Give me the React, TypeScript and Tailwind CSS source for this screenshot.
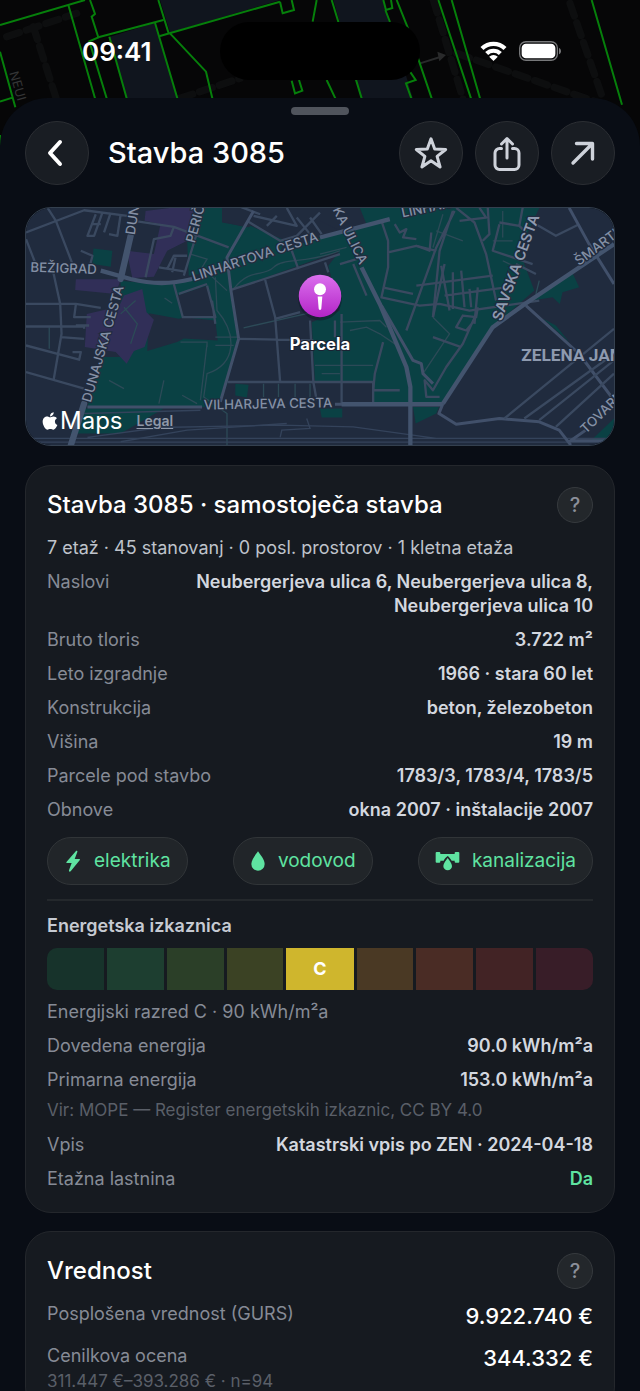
import type { ReactNode } from "react";
import { FaApple } from "react-icons/fa";

interface Fact {
  label: string;
  value: string;
  accent?: boolean;
}

const buildingFacts: Fact[] = [
  { label: "Naslovi", value: "Neubergerjeva ulica 6, Neubergerjeva ulica 8, Neubergerjeva ulica 10" },
  { label: "Bruto tloris", value: "3.722 m²" },
  { label: "Leto izgradnje", value: "1966 · stara 60 let" },
  { label: "Konstrukcija", value: "beton, železobeton" },
  { label: "Višina", value: "19 m" },
  { label: "Parcele pod stavbo", value: "1783/3, 1783/4, 1783/5" },
  { label: "Obnove", value: "okna 2007 · inštalacije 2007" },
];

const energyFacts: Fact[] = [
  { label: "Dovedena energija", value: "90.0 kWh/m²a" },
  { label: "Primarna energija", value: "153.0 kWh/m²a" },
];

const registryFacts: Fact[] = [
  { label: "Vpis", value: "Katastrski vpis po ZEN · 2024-04-18" },
  { label: "Etažna lastnina", value: "Da", accent: true },
];

const energyScale = [
  { id: "A2", color: "bg-[#17332b]" },
  { id: "A1", color: "bg-[#1d3e30]" },
  { id: "B2", color: "bg-[#2b3f28]" },
  { id: "B1", color: "bg-[#3b4224]" },
  { id: "C", color: "bg-[#cfb62d]", active: true },
  { id: "D", color: "bg-[#4a3924]" },
  { id: "E", color: "bg-[#4a2c25]" },
  { id: "F", color: "bg-[#422325]" },
  { id: "G", color: "bg-[#381d28]" },
];

function ParcelMap() {
  return (
    <svg
      viewBox="0 0 1920 450"
      preserveAspectRatio="xMidYMin slice"
      className="absolute inset-x-0 top-0 h-[150px] w-full"
      aria-hidden="true"
    >
      <rect width="1920" height="450" fill="#060607" />
      <g fill="#10151e">
        <path d="M480 0H840L510 98Z" />
        <path d="M330 110 465 68 532 295H380Z" />
        <path d="M1000 0H1150L1240 300H1085Z" />
      </g>
      <g fill="none" stroke="#0d0e0f" strokeWidth="22" strokeDasharray="40 22" strokeLinecap="round">
        <path d="M20 110 230 40M100 80 170 300M540 295 720 235" />
        <path d="M1300 0 1390 300M1370 160 1800 310M1710 10 1810 300" />
      </g>
      <path d="M1260 190 1330 168" fill="none" stroke="#292a2b" strokeWidth="6" />
      <path d="M1312 155 1338 165 1318 184Z" fill="#292a2b" />
      <g fill="none" stroke="#067f0b" strokeWidth="6">
        <path d="M0 75 255 0M205 15 285 295M270 0 285 42 275 50 295 112 268 124 320 295" />
        <path d="M295 112 490 60M328 110 380 295M465 68 532 295M475 0 506 100M480 108 840 5" />
        <path d="M510 100 618 215 637 295M0 155 46 322M0 305 40 292M0 405v35" />
        <path d="M840 5 848 40 882 30 875 0M950 0 938 65M875 242 885 280 907 272 897 240" />
        <path d="M995 0 1085 295M980 240 1006 295M1150 0l8 30 19-6-4-24M1156 30l14 36" />
        <path d="M1190 0 1222 80 1295 295M1230 215 1247 240 1218 250 1234 295" />
        <path d="M1315 0 1413 295M1355 0 1440 295M1775 0 1866 314" />
      </g>
      <text transform="translate(28 218) rotate(74)" fill="#343536" className="text-[38px]">
        NEUI
      </text>
    </svg>
  );
}

function LocationMap() {
  return (
    <svg
      viewBox="15 21 1770 714"
      preserveAspectRatio="xMidYMid slice"
      className="block h-[237px] w-full"
      role="img"
      aria-label="Parcela"
    >
      <defs>
        <linearGradient id="pin" x1="0" y1="0" x2="0" y2="1">
          <stop offset="0" stopColor="#db70ee" />
          <stop offset="1" stopColor="#b324c6" />
        </linearGradient>
      </defs>
      <rect x="0" y="0" width="1800" height="750" fill="#202b3e" />

      {/* Parks */}
      <g fill="#0a4144">
        <path d="M300 240 400 250 515 235 900 110 960 95 1020 60V21H1560L1500 150 1545 270 1420 380 1270 610H1062V545H885L875 365 960 330 925 195 960 150 632 268 655 420 622 545 600 620H200L240 470 330 470 300 340Z" />
        <path d="M500 120 545 21H605V65L690 80 790 125 780 155 600 210 505 225Z" />
        <path d="M690 75 810 125 630 160Z" />
        <path d="M218 143 275 150 270 198 215 190Z" />
        <path d="M188 625H430L300 700H150Z" />
        <path d="M645 550 685 553 680 592 645 586Z" />
        <path d="M1540 300 1657 210 1680 260 1630 275 1622 310 1600 290Z" />
        <path d="M1572 355 1610 375 1650 425Z" />
        <path d="M1180 620H1258L1250 640 1188 670Z" />
        <path d="M1715 722 1785 655V722Z" />
        <path d="M900 625H967V652H905Z" />
      </g>
      <g fill="#202b3e">
        <path d="M470 285 560 255 585 350H487Z" />
        <path d="M385 338 475 355 490 350 585 360 592 420 490 414 470 425 380 452Z" />
        <path d="M1020 21 1040 70 960 90 900 60 900 21Z" />
        <path d="M605 21H690L680 80 605 62Z" />
        <path d="M590 620 625 545 645 550 620 640Z" />
      </g>

      {/* Commercial blocks */}
      <g fill="#312f58">
        <path d="M372 60 375 30 450 21H522L500 120 440 150 400 228 335 232 318 150 400 160 420 70Z" />
        <path d="M165 236 300 236 285 280 163 268Z" />
        <path d="M310 285 365 265 378 335 400 358 372 440 340 452 318 490 285 455 192 440 198 340 295 318Z" />
      </g>

      {/* Footpaths */}
      <g fill="none" stroke="#2c4a57" strokeWidth="4">
        <path d="M510 160 560 175 545 200 620 270M585 230 590 330C650 400 650 490 560 520L550 590 620 640V735M640 265C690 200 730 230 760 200S860 190 960 150" />
        <path d="M560 430 540 600M480 425H560V440M430 540 415 610M265 540 310 565M485 585 530 610M432 292 455 308M585 410H655M585 435H640M670 382 880 335" />
        <path d="M310 320 350 370 330 430M345 300 300 340M85 380V445M730 550V590M775 550V590M825 550V590M870 550V590M885 495H1060M905 520H960" />
        <path d="M990 390 1040 380 1080 400 1140 440M900 160 980 140M1100 380 1080 360 960 365M1240 350 1290 400 1210 520" />
        <path d="M1250 90 1330 120M1270 40 1240 140M1450 30V110M1420 120 1480 120M1450 180 1490 200M1560 240 1550 280" />
      </g>

      {/* Railway */}
      <g fill="none" stroke="#34435b" strokeWidth="4">
        <path d="M15 715H1785M15 726H1785M200 712 420 682 780 675 1000 680 1250 715" />
        <path d="M300 725 500 690 800 670M780 712 785 690 870 685 860 655M190 640 540 630" />
      </g>

      {/* Side streets */}
      <g fill="none" stroke="#3a4960" strokeWidth="7" strokeLinejoin="round">
        <path d="M15 95 190 28 320 45M15 115 50 205M80 21 105 60 155 190M225 40 200 105H220L245 35M270 35 250 95M300 40 290 105 265 100M215 70H240M180 150 215 165 205 205" />
        <path d="M95 205 118 310 122 400 98 540M15 310H165L240 322M165 312 160 350 210 350M165 375H205M15 378H190V385M120 410 190 415M15 435 175 478 180 455 155 455M15 515 190 565" />
        <path d="M340 60 460 78 625 140M530 95 490 225M500 165H460L440 205M465 170 455 215M415 200 490 212M375 230 400 115 450 105 460 78" />
        <path d="M460 250 487 350H585L560 255M475 280 560 250M585 370 575 300" />
        <path d="M680 60 780 120 830 105 900 35M700 45 830 75 800 21M740 75 770 45M830 50 870 100M870 50 905 100M640 10 720 40" />
        <path d="M632 268 960 160M735 238 765 350 780 545M765 355 840 335M655 415 880 420M870 360 880 545 890 600M815 150 835 205M915 185 925 215" />
        <path d="M622 545H1060V610M965 340V610M960 190 1010 175M945 360V410" />
        <path d="M1085 60 1105 120 1105 200 1085 290 1200 315 1260 310 1350 330 1560 300M1105 155 1190 135 1250 150M1095 262 1180 280M1190 255 1420 225" />
        <path d="M1305 30 1250 140 1160 390M1300 30 1260 150 1240 350M1310 21 1365 65 1400 160 1430 300M1405 21 1410 100 1390 120M1320 60 1400 50 1380 21" />
        <path d="M1125 70 1140 95 1160 85 1150 110 1190 115M1235 95 1230 150 1190 135M1275 190 1240 350M1275 285 1460 260M1300 215 1300 325M1325 210 1335 320M1350 265 1355 320M1375 260 1365 370" />
        <path d="M1375 320 1370 350 1330 345 1310 380 1340 390 1365 360M1370 340 1330 430 1280 500 1240 570 1215 540 1220 590H1260M1240 410 1325 440M1265 195 1290 330" />
        <path d="M1440 65 1500 75 1520 95M1440 70 1420 150 1540 190M1510 21 1500 75M1490 190 1550 220M1550 70 1610 105 1680 70" />
        <path d="M1090 425 1065 520 1060 570H1140M1000 190 1040 285" />
      </g>

      {/* Main streets */}
      <g fill="none" stroke="#41506a" strokeWidth="9" strokeLinejoin="round">
        <path d="M1650 21 1710 130 1785 250M1520 315 1680 460 1785 600" />
        <path d="M1270 610 1258 640 1310 672 1440 655 1560 665 1620 690 1655 735M1650 725 1700 690M1655 722H1785" />
        <path d="M200 620H545M655 415 632 270 620 170 700 30M655 415 600 605M945 612H970" />
        <path d="M1085 315 1180 480 1205 490 1210 520 1240 550" />
      </g>
      <g fill="none" stroke="#3a4960" strokeWidth="7">
        <path d="M1455 655 1785 385M1515 655 1785 460M1560 660 1785 480M1610 680 1785 520" />
      </g>
      <g fill="none" stroke="#43546e" strokeWidth="13" strokeLinejoin="round">
        <path d="M1025 200 1080 310 1160 500 1172 560V735M965 612H1270" />
        <path d="M240 210 330 235C400 252 450 250 515 235M900 110 1110 55" />
        <path d="M1270 610 1420 380 1520 308 1785 130" />
      </g>
      <path d="M330 105 300 235M190 610 150 735" fill="none" stroke="#43546e" strokeWidth="19" strokeLinecap="round" />

      {/* Street names */}
      <g className="text-[40px] font-medium" fill="#8490a5" stroke="#202b3e" strokeWidth="7" paintOrder="stroke">
        <text transform="translate(28 213) rotate(2)">BEŽIGRAD</text>
        <text transform="translate(342 103) rotate(-81)">DUNAJSKA</text>
        <text transform="translate(210 608) rotate(-74)">DUNAJSKA CESTA</text>
        <text transform="translate(523 128) rotate(-75)">PERIČEVA</text>
        <text transform="translate(520 242) rotate(-18)">LINHARTOVA CESTA</text>
        <text transform="translate(1148 50) rotate(-12)">LINHARTOVA</text>
        <text transform="translate(550 628) rotate(-1)">VILHARJEVA CESTA</text>
        <text transform="translate(938 26) rotate(64)">KA ULICA</text>
        <text transform="translate(1680 196) rotate(-37)">ŠMARTINSKA</text>
        <text transform="translate(1700 702) rotate(-44)">TOVARNIŠKA</text>
      </g>
      <g fill="#8e9aaf" stroke="#202b3e" strokeWidth="7" paintOrder="stroke">
        <text transform="translate(1446 364) rotate(-70)" className="text-[44px] font-semibold">
          SAVSKA CESTA
        </text>
        <text x="1506" y="481" className="font-['Liberation_Sans_Narrow','Roboto',sans-serif] text-[52px] font-bold">
          ZELENA JAMA
        </text>
      </g>

      {/* Pin */}
      <circle cx="900" cy="294" r="66" fill="#10182a" opacity="0.5" />
      <circle cx="900" cy="286" r="64" fill="url(#pin)" />
      <circle cx="900" cy="266" r="18" fill="#fff" />
      <path d="M893 288h14l-3 36a4 4 0 0 1-8 0Z" fill="#fff" />
      <text
        x="900"
        y="449"
        textAnchor="middle"
        fill="#fff"
        stroke="#1a2333"
        strokeWidth="6"
        paintOrder="stroke"
        className="text-[50px] font-bold"
      >
        Parcela
      </text>
    </svg>
  );
}

function StatusBar() {
  return (
    <div className="relative flex h-[98px] shrink-0 items-start px-[82px] pt-[22px]">
      <span className="flex h-[58px] flex-1 items-center text-[26px] font-semibold text-white">09:41</span>
      <div className="h-[58px] w-[200px] rounded-full bg-black" />
      <div className="flex h-[58px] flex-1 items-center justify-end gap-3">
        <svg viewBox="0 0 80 60" className="h-5 w-[27px]" fill="#fff" aria-label="Wi-Fi">
          <path d="M40 60 27 47a19 19 0 0 1 26 0Z" />
          <path d="M15 33a36 36 0 0 1 50 0l-9 9a23 23 0 0 0-32 0Z" />
          <path d="M1 18a56 56 0 0 1 78 0l-9 9a43 43 0 0 0-60 0Z" />
        </svg>
        <svg viewBox="0 0 130 60" className="-mr-1 h-5 w-[43px]" aria-label="Baterija">
          <rect x="2" y="2" width="114" height="56" rx="19" fill="none" stroke="#77787a" strokeWidth="4" />
          <rect x="8" y="8" width="102" height="44" rx="13" fill="#fff" />
          <path d="M121 21c8 3 8 16 0 19Z" fill="#77787a" />
        </svg>
      </div>
    </div>
  );
}

function RoundButton({ label, children }: { label: string; children: ReactNode }) {
  return (
    <button
      type="button"
      aria-label={label}
      className="flex size-16 shrink-0 items-center justify-center rounded-full border border-[#2c2f34] bg-[#191d23] text-[#ced2da]"
    >
      <svg viewBox="0 0 36 36" className="size-9" fill="none" stroke="currentColor" strokeLinecap="round" strokeLinejoin="round">
        {children}
      </svg>
    </button>
  );
}

function Card({ title, children }: { title: string; children: ReactNode }) {
  return (
    <section className="rounded-[26px] border border-[#24272c] bg-[#161a20] p-[21px]">
      <div className="flex items-center justify-between">
        <h2 className="text-2xl font-medium text-white">{title}</h2>
        <button
          type="button"
          aria-label="Pomoč"
          className="size-9 rounded-full border border-[#363a3e] bg-[#23272b] text-xl leading-none font-medium text-[#8b909a]"
        >
          ?
        </button>
      </div>
      {children}
    </section>
  );
}

function FactList({ facts }: { facts: Fact[] }) {
  return (
    <dl className="flex flex-col gap-2.5">
      {facts.map((fact) => (
        <div key={fact.label} className="flex justify-between gap-6">
          <dt className="shrink-0 text-[#868b96]">{fact.label}</dt>
          <dd
            className={
              fact.accent
                ? "text-right font-semibold text-[#5fe3a1]"
                : "max-w-[420px] text-right font-semibold text-[#d3d7df]"
            }
          >
            {fact.value}
          </dd>
        </div>
      ))}
    </dl>
  );
}

function Chip({ label, children }: { label: string; children: ReactNode }) {
  return (
    <li className="flex h-12 items-center gap-3 rounded-full border border-[#313538] bg-[#212529] px-4 text-[19px] text-[#5fe3a1]">
      {children}
      <span>{label}</span>
    </li>
  );
}

export default function App() {
  return (
    <div className="relative flex h-screen flex-col overflow-hidden bg-[#060607] font-[Inter,'Liberation_Sans',sans-serif]">
      <ParcelMap />
      <StatusBar />

      <main className="relative flex-1 overflow-hidden rounded-t-[48px] bg-[#090d15] px-[25px] pt-[9px] text-lg leading-6">
        <div className="mx-auto h-2 w-[58px] rounded-full bg-[#50545c]" />

        <header className="mt-1.5 flex items-center gap-3">
          <RoundButton label="Nazaj">
            <path d="M21 7 11 18l10 11" stroke="#fff" strokeWidth="4" />
          </RoundButton>
          <h1 className="ml-[7px] flex-1 text-[29px] font-medium text-white">Stavba 3085</h1>
          <RoundButton label="Priljubljeno">
            <path d="m18 3.800 3.700 10.300 11 .400-8.600 6.900 3 10.600-9.100-6.200-9.100 6.200 3-10.600-8.600-6.900 11-.400Z" strokeWidth="3" />
          </RoundButton>
          <RoundButton label="Deli">
            <path d="M18 23V4M12.500 9 18 3.500 23.500 9" strokeWidth="3" />
            <path d="M12.500 13.500H10.500a4.500 4.500 0 0 0-4.500 4.500v12a4.500 4.500 0 0 0 4.500 4.500h15a4.500 4.500 0 0 0 4.500-4.500V18a4.500 4.500 0 0 0-4.500-4.500H23.500" strokeWidth="3" />
          </RoundButton>
          <RoundButton label="Odpri">
            <path d="M8 28 27 9M11.500 8.500H27.500V24" strokeWidth="3.400" />
          </RoundButton>
        </header>

        <div className="relative mt-[22px] overflow-hidden rounded-[26px] border border-[#34404f]">
          <LocationMap />
          <div className="absolute bottom-3 left-3.5 flex items-center text-white">
            <FaApple className="size-5" />
            <span className="text-2xl leading-6">Maps</span>
            <a href="#" className="ml-3.5 text-sm font-semibold text-[#8f99a9] underline underline-offset-2">
              Legal
            </a>
          </div>
        </div>

        <div className="mt-[19px] flex flex-col gap-[18px]">
          <Card title="Stavba 3085 · samostoječa stavba">
            <p className="mt-[13px] mb-2.5 text-[#bfc3cb]">7 etaž · 45 stanovanj · 0 posl. prostorov · 1 kletna etaža</p>
            <FactList facts={buildingFacts} />

            <ul className="mt-[15px] flex justify-between">
              <Chip label="elektrika">
                <svg viewBox="0 0 54 66" className="h-[22px] w-[18px]" fill="currentColor" aria-hidden="true">
                  <path d="M36 3 8 35c-2 2-1 4 2 4h13l-8 22c-1 4 2 5 5 3l27-33c2-2 1-4-2-4H32l8-21c1-3-2-5-4-3Z" />
                </svg>
              </Chip>
              <Chip label="vodovod">
                <svg viewBox="0 0 48 60" className="h-5 w-4" fill="currentColor" aria-hidden="true">
                  <path d="M24 1C18 10 4 26 4 39a20 20 0 0 0 40 0C44 26 30 10 24 1Z" />
                </svg>
              </Chip>
              <Chip label="kanalizacija">
                <svg viewBox="0 0 75 60" className="h-5 w-[25px]" fill="currentColor" aria-hidden="true">
                  <path d="M5 3h8q3 0 3 3v3h43V6q0-3 3-3h8q3 0 3 3v26q0 3-3 3h-8q-3 0-3-3v-3H50C46 23 42 18 38 15 33 19 29 23 26 29H16v3q0 3-3 3H5q-3 0-3-3V6q0-3 3-3Z" />
                  <path d="M38 21c-4 7-13 16-13 24a13 13 0 0 0 26 0c0-8-9-17-13-24Z" />
                </svg>
              </Chip>
            </ul>

            <hr className="mt-3.5 mb-[13px] border-t-2 border-[#24282c]" />

            <h3 className="font-semibold text-[#c6cad2]">Energetska izkaznica</h3>
            <div className="my-2.5 flex h-[42px] gap-[3px] overflow-hidden rounded-[10px]">
              {energyScale.map((step) => (
                <div
                  key={step.id}
                  className={`flex items-center justify-center text-lg font-bold text-white ${
                    step.active ? "flex-[1.18]" : "flex-1"
                  } ${step.color}`}
                >
                  {step.active && step.id}
                </div>
              ))}
            </div>
            <p className="mb-2.5 text-[#868b96]">Energijski razred C · 90 kWh/m²a</p>
            <FactList facts={energyFacts} />
            <p className="mt-2 mb-[13px] text-[17px] leading-5 text-[#5a5f68]">
              Vir: MOPE — Register energetskih izkaznic, CC BY 4.0
            </p>
            <FactList facts={registryFacts} />
          </Card>

          <Card title="Vrednost">
            <dl className="mt-[13px] flex flex-col gap-3.5">
              <div className="flex justify-between">
                <dt className="text-[#868b96]">Posplošena vrednost (GURS)</dt>
                <dd className="text-[22px] leading-7 font-medium text-white">9.922.740 €</dd>
              </div>
              <div className="flex justify-between">
                <dt className="text-[#868b96]">
                  Cenilkova ocena
                  <span className="mt-[3px] block text-[17px] leading-5 text-[#5a5f68]">311.447 €–393.286 € · n=94</span>
                </dt>
                <dd className="text-[22px] leading-7 font-medium text-white">344.332 €</dd>
              </div>
            </dl>
          </Card>
        </div>
      </main>
    </div>
  );
}
